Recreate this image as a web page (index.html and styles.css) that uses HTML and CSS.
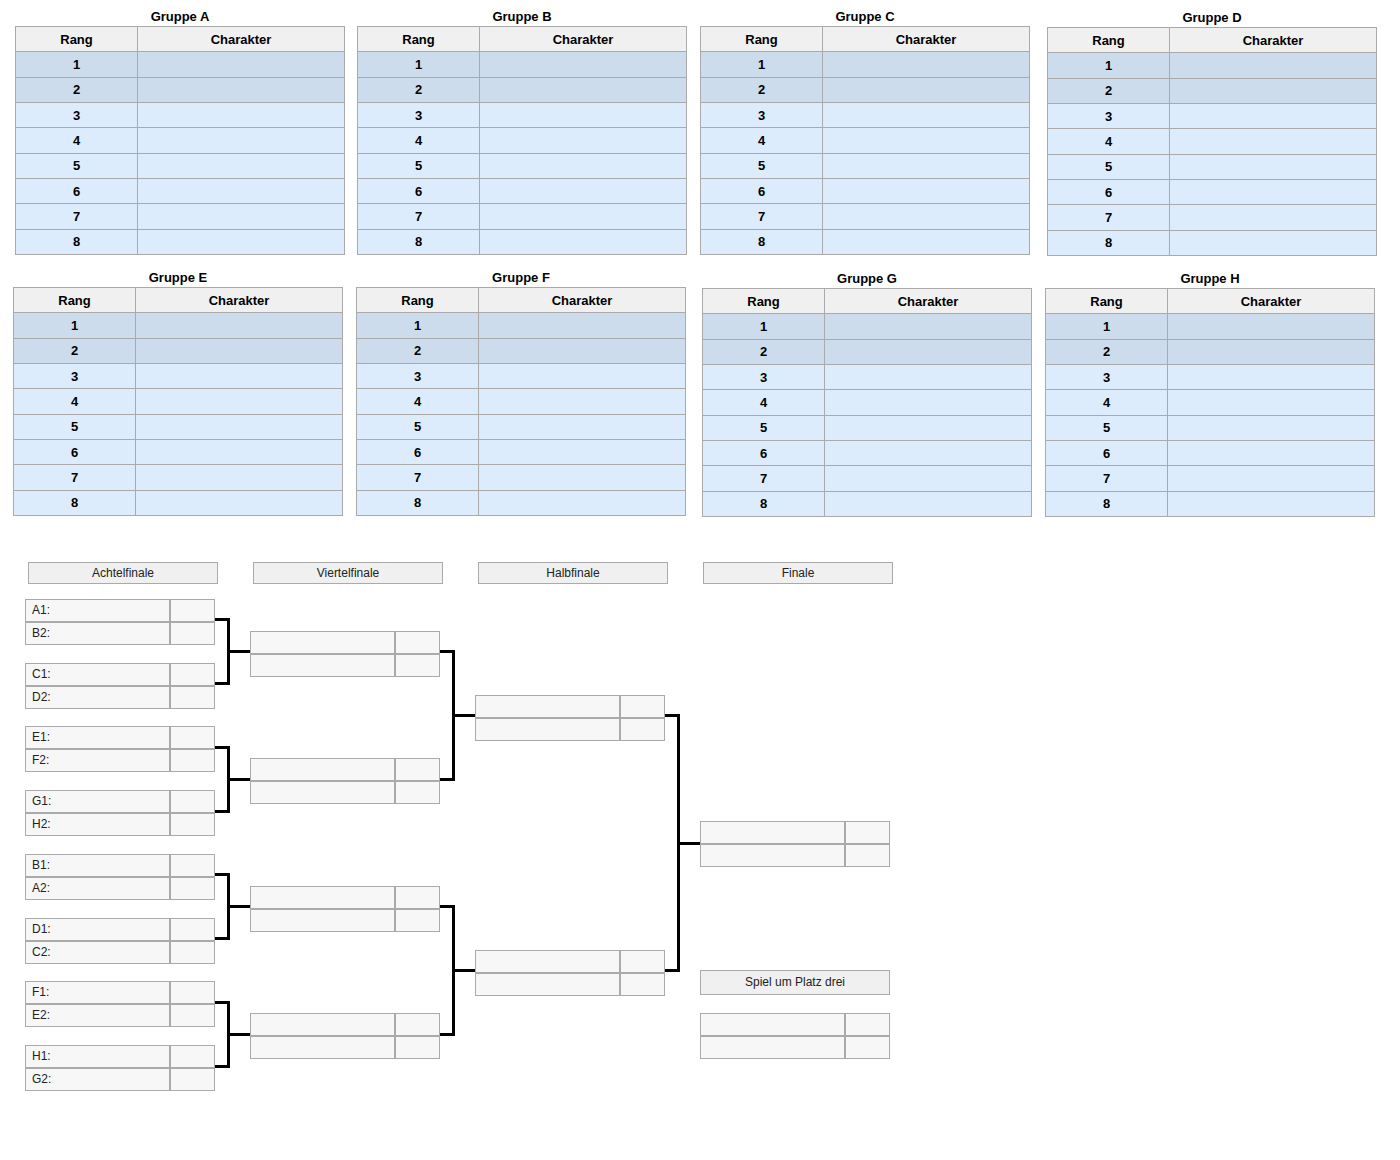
FILE: index.html
```html
<!DOCTYPE html>
<html lang="de">
<head>
<meta charset="utf-8">
<title>Turnier</title>
<link rel="stylesheet" href="styles.css">
</head>
<body>
<div class="groups">
  <div class="group-row row-top">
    <section class="group g-a">
      <h2 class="group-title">Gruppe A</h2>
      <table class="group-table">
        <tr class="head"><th class="c-rank">Rang</th><th>Charakter</th></tr>
        <tr class="adv"><td>1</td><td></td></tr>
        <tr class="adv"><td>2</td><td></td></tr>
        <tr><td>3</td><td></td></tr>
        <tr><td>4</td><td></td></tr>
        <tr><td>5</td><td></td></tr>
        <tr><td>6</td><td></td></tr>
        <tr><td>7</td><td></td></tr>
        <tr><td>8</td><td></td></tr>
      </table>
    </section>
    <section class="group g-b">
      <h2 class="group-title">Gruppe B</h2>
      <table class="group-table">
        <tr class="head"><th class="c-rank">Rang</th><th>Charakter</th></tr>
        <tr class="adv"><td>1</td><td></td></tr>
        <tr class="adv"><td>2</td><td></td></tr>
        <tr><td>3</td><td></td></tr>
        <tr><td>4</td><td></td></tr>
        <tr><td>5</td><td></td></tr>
        <tr><td>6</td><td></td></tr>
        <tr><td>7</td><td></td></tr>
        <tr><td>8</td><td></td></tr>
      </table>
    </section>
    <section class="group g-c">
      <h2 class="group-title">Gruppe C</h2>
      <table class="group-table">
        <tr class="head"><th class="c-rank">Rang</th><th>Charakter</th></tr>
        <tr class="adv"><td>1</td><td></td></tr>
        <tr class="adv"><td>2</td><td></td></tr>
        <tr><td>3</td><td></td></tr>
        <tr><td>4</td><td></td></tr>
        <tr><td>5</td><td></td></tr>
        <tr><td>6</td><td></td></tr>
        <tr><td>7</td><td></td></tr>
        <tr><td>8</td><td></td></tr>
      </table>
    </section>
    <section class="group g-d">
      <h2 class="group-title">Gruppe D</h2>
      <table class="group-table">
        <tr class="head"><th class="c-rank">Rang</th><th>Charakter</th></tr>
        <tr class="adv"><td>1</td><td></td></tr>
        <tr class="adv"><td>2</td><td></td></tr>
        <tr><td>3</td><td></td></tr>
        <tr><td>4</td><td></td></tr>
        <tr><td>5</td><td></td></tr>
        <tr><td>6</td><td></td></tr>
        <tr><td>7</td><td></td></tr>
        <tr><td>8</td><td></td></tr>
      </table>
    </section>
  </div>
  <div class="group-row row-bottom">
    <section class="group g-e">
      <h2 class="group-title">Gruppe E</h2>
      <table class="group-table">
        <tr class="head"><th class="c-rank">Rang</th><th>Charakter</th></tr>
        <tr class="adv"><td>1</td><td></td></tr>
        <tr class="adv"><td>2</td><td></td></tr>
        <tr><td>3</td><td></td></tr>
        <tr><td>4</td><td></td></tr>
        <tr><td>5</td><td></td></tr>
        <tr><td>6</td><td></td></tr>
        <tr><td>7</td><td></td></tr>
        <tr><td>8</td><td></td></tr>
      </table>
    </section>
    <section class="group g-f">
      <h2 class="group-title">Gruppe F</h2>
      <table class="group-table">
        <tr class="head"><th class="c-rank">Rang</th><th>Charakter</th></tr>
        <tr class="adv"><td>1</td><td></td></tr>
        <tr class="adv"><td>2</td><td></td></tr>
        <tr><td>3</td><td></td></tr>
        <tr><td>4</td><td></td></tr>
        <tr><td>5</td><td></td></tr>
        <tr><td>6</td><td></td></tr>
        <tr><td>7</td><td></td></tr>
        <tr><td>8</td><td></td></tr>
      </table>
    </section>
    <section class="group g-g">
      <h2 class="group-title">Gruppe G</h2>
      <table class="group-table">
        <tr class="head"><th class="c-rank">Rang</th><th>Charakter</th></tr>
        <tr class="adv"><td>1</td><td></td></tr>
        <tr class="adv"><td>2</td><td></td></tr>
        <tr><td>3</td><td></td></tr>
        <tr><td>4</td><td></td></tr>
        <tr><td>5</td><td></td></tr>
        <tr><td>6</td><td></td></tr>
        <tr><td>7</td><td></td></tr>
        <tr><td>8</td><td></td></tr>
      </table>
    </section>
    <section class="group g-h">
      <h2 class="group-title">Gruppe H</h2>
      <table class="group-table">
        <tr class="head"><th class="c-rank">Rang</th><th>Charakter</th></tr>
        <tr class="adv"><td>1</td><td></td></tr>
        <tr class="adv"><td>2</td><td></td></tr>
        <tr><td>3</td><td></td></tr>
        <tr><td>4</td><td></td></tr>
        <tr><td>5</td><td></td></tr>
        <tr><td>6</td><td></td></tr>
        <tr><td>7</td><td></td></tr>
        <tr><td>8</td><td></td></tr>
      </table>
    </section>
  </div>
</div>

<div class="bracket">
  <div class="round-heads">
    <div class="round-head">Achtelfinale</div>
    <div class="round-head">Viertelfinale</div>
    <div class="round-head">Halbfinale</div>
    <div class="round-head">Finale</div>
  </div>
  <div class="rounds">
    <div class="round">
      <div class="slot"><div class="match"><div class="m-row"><div class="m-name">A1:</div><div class="m-score"></div></div><div class="m-row"><div class="m-name">B2:</div><div class="m-score"></div></div></div></div>
      <div class="slot"><div class="match"><div class="m-row"><div class="m-name">C1:</div><div class="m-score"></div></div><div class="m-row"><div class="m-name">D2:</div><div class="m-score"></div></div></div></div>
      <div class="slot"><div class="match"><div class="m-row"><div class="m-name">E1:</div><div class="m-score"></div></div><div class="m-row"><div class="m-name">F2:</div><div class="m-score"></div></div></div></div>
      <div class="slot"><div class="match"><div class="m-row"><div class="m-name">G1:</div><div class="m-score"></div></div><div class="m-row"><div class="m-name">H2:</div><div class="m-score"></div></div></div></div>
      <div class="slot"><div class="match"><div class="m-row"><div class="m-name">B1:</div><div class="m-score"></div></div><div class="m-row"><div class="m-name">A2:</div><div class="m-score"></div></div></div></div>
      <div class="slot"><div class="match"><div class="m-row"><div class="m-name">D1:</div><div class="m-score"></div></div><div class="m-row"><div class="m-name">C2:</div><div class="m-score"></div></div></div></div>
      <div class="slot"><div class="match"><div class="m-row"><div class="m-name">F1:</div><div class="m-score"></div></div><div class="m-row"><div class="m-name">E2:</div><div class="m-score"></div></div></div></div>
      <div class="slot"><div class="match"><div class="m-row"><div class="m-name">H1:</div><div class="m-score"></div></div><div class="m-row"><div class="m-name">G2:</div><div class="m-score"></div></div></div></div>
    </div>
    <div class="links links-1">
      <div class="link"><div class="fork"></div><div class="stub"></div></div>
      <div class="link"><div class="fork"></div><div class="stub"></div></div>
      <div class="link"><div class="fork"></div><div class="stub"></div></div>
      <div class="link"><div class="fork"></div><div class="stub"></div></div>
    </div>
    <div class="round">
      <div class="slot"><div class="match"><div class="m-row"><div class="m-name"></div><div class="m-score"></div></div><div class="m-row"><div class="m-name"></div><div class="m-score"></div></div></div></div>
      <div class="slot"><div class="match"><div class="m-row"><div class="m-name"></div><div class="m-score"></div></div><div class="m-row"><div class="m-name"></div><div class="m-score"></div></div></div></div>
      <div class="slot"><div class="match"><div class="m-row"><div class="m-name"></div><div class="m-score"></div></div><div class="m-row"><div class="m-name"></div><div class="m-score"></div></div></div></div>
      <div class="slot"><div class="match"><div class="m-row"><div class="m-name"></div><div class="m-score"></div></div><div class="m-row"><div class="m-name"></div><div class="m-score"></div></div></div></div>
    </div>
    <div class="links links-2">
      <div class="link"><div class="fork"></div><div class="stub"></div></div>
      <div class="link"><div class="fork"></div><div class="stub"></div></div>
    </div>
    <div class="round">
      <div class="slot"><div class="match"><div class="m-row"><div class="m-name"></div><div class="m-score"></div></div><div class="m-row"><div class="m-name"></div><div class="m-score"></div></div></div></div>
      <div class="slot"><div class="match"><div class="m-row"><div class="m-name"></div><div class="m-score"></div></div><div class="m-row"><div class="m-name"></div><div class="m-score"></div></div></div></div>
    </div>
    <div class="links links-3">
      <div class="link"><div class="fork"></div><div class="stub"></div></div>
    </div>
    <div class="round round-final">
      <div class="match final-match"><div class="m-row"><div class="m-name"></div><div class="m-score"></div></div><div class="m-row"><div class="m-name"></div><div class="m-score"></div></div></div>
      <div class="third-head">Spiel um Platz drei</div>
      <div class="match third-match"><div class="m-row"><div class="m-name"></div><div class="m-score"></div></div><div class="m-row"><div class="m-name"></div><div class="m-score"></div></div></div>
    </div>
  </div>
</div>
</body>
</html>
```

FILE: styles.css
```css
* { box-sizing: border-box; }

body {
  margin: 0;
  background: #ffffff;
  font-family: "Liberation Sans", Arial, sans-serif;
  color: #000;
}

.group-row {
  display: flex;
  align-items: flex-start;
}
.row-top { padding-top: 8px; }
.row-bottom { margin-top: 13px; }

.group { width: 330px; }
.g-a { margin-left: 15px; }
.g-b { margin-left: 12px; }
.g-c { margin-left: 13px; }
.g-d { margin-left: 17px; margin-top: 1px; }
.g-e { margin-left: 13px; }
.g-f { margin-left: 13px; }
.g-g { margin-left: 16px; margin-top: 1px; }
.g-h { margin-left: 13px; margin-top: 1px; }

.group-title {
  margin: 0 0 1px;
  padding-top: 1px;
  font-size: 13px;
  line-height: 16px;
  font-weight: bold;
  text-align: center;
}

.group-table {
  width: 330px;
  height: 229px;
  border-collapse: collapse;
  table-layout: fixed;
  font-size: 13px;
  font-weight: bold;
}
.group-table th,
.group-table td {
  border: 1px solid #aaaaaa;
  padding: 0;
  text-align: center;
  line-height: 15px;
}
.group-table .c-rank { width: 122px; }
.group-table .head th { background: #f0f0f0; }
.group-table tr { background: #dcecfc; }
.group-table tr.adv { background: #ccdcec; }

/* bracket */
.bracket {
  margin-top: 45px;
  font-size: 12px;
  color: #222;
}
.round-heads {
  display: flex;
  gap: 35px;
  margin-left: 28px;
}
.round-head,
.third-head {
  width: 190px;
  height: 22px;
  border: 1px solid #aaaaaa;
  background: #f0f0f0;
  text-align: center;
  line-height: 20px;
}
.rounds {
  display: flex;
  height: 510px;
  margin-top: 6px;
  margin-left: 25px;
}
.round {
  display: flex;
  flex-direction: column;
  width: 190px;
}
.slot {
  flex: 1;
  display: flex;
  align-items: center;
}
.match { width: 190px; }
.m-row { display: flex; }
.m-name,
.m-score {
  height: 23px;
  border: 1px solid #aaaaaa;
  background: #f7f7f7;
  line-height: 21px;
}
.m-name { width: 145px; padding-left: 6px; }
.m-score { width: 45px; }

.links {
  display: flex;
  flex-direction: column;
  width: 35px;
  margin-top: -2px;
  margin-bottom: 2px;
}
.link {
  flex: 1;
  display: flex;
  align-items: center;
}
.fork {
  width: 15px;
  border: 3px solid #000;
  border-left: none;
}
.links-1 .fork { height: 66.75px; }
.links-2 .fork { height: 130.5px; }
.links-3 .fork { height: 258px; }
.stub {
  width: 20px;
  height: 3px;
  background: #000;
}

.final-match { margin-top: 231px; }
.third-head {
  height: 25px;
  line-height: 23px;
  margin-top: 103px;
}
.third-match { margin-top: 18px; }
```
